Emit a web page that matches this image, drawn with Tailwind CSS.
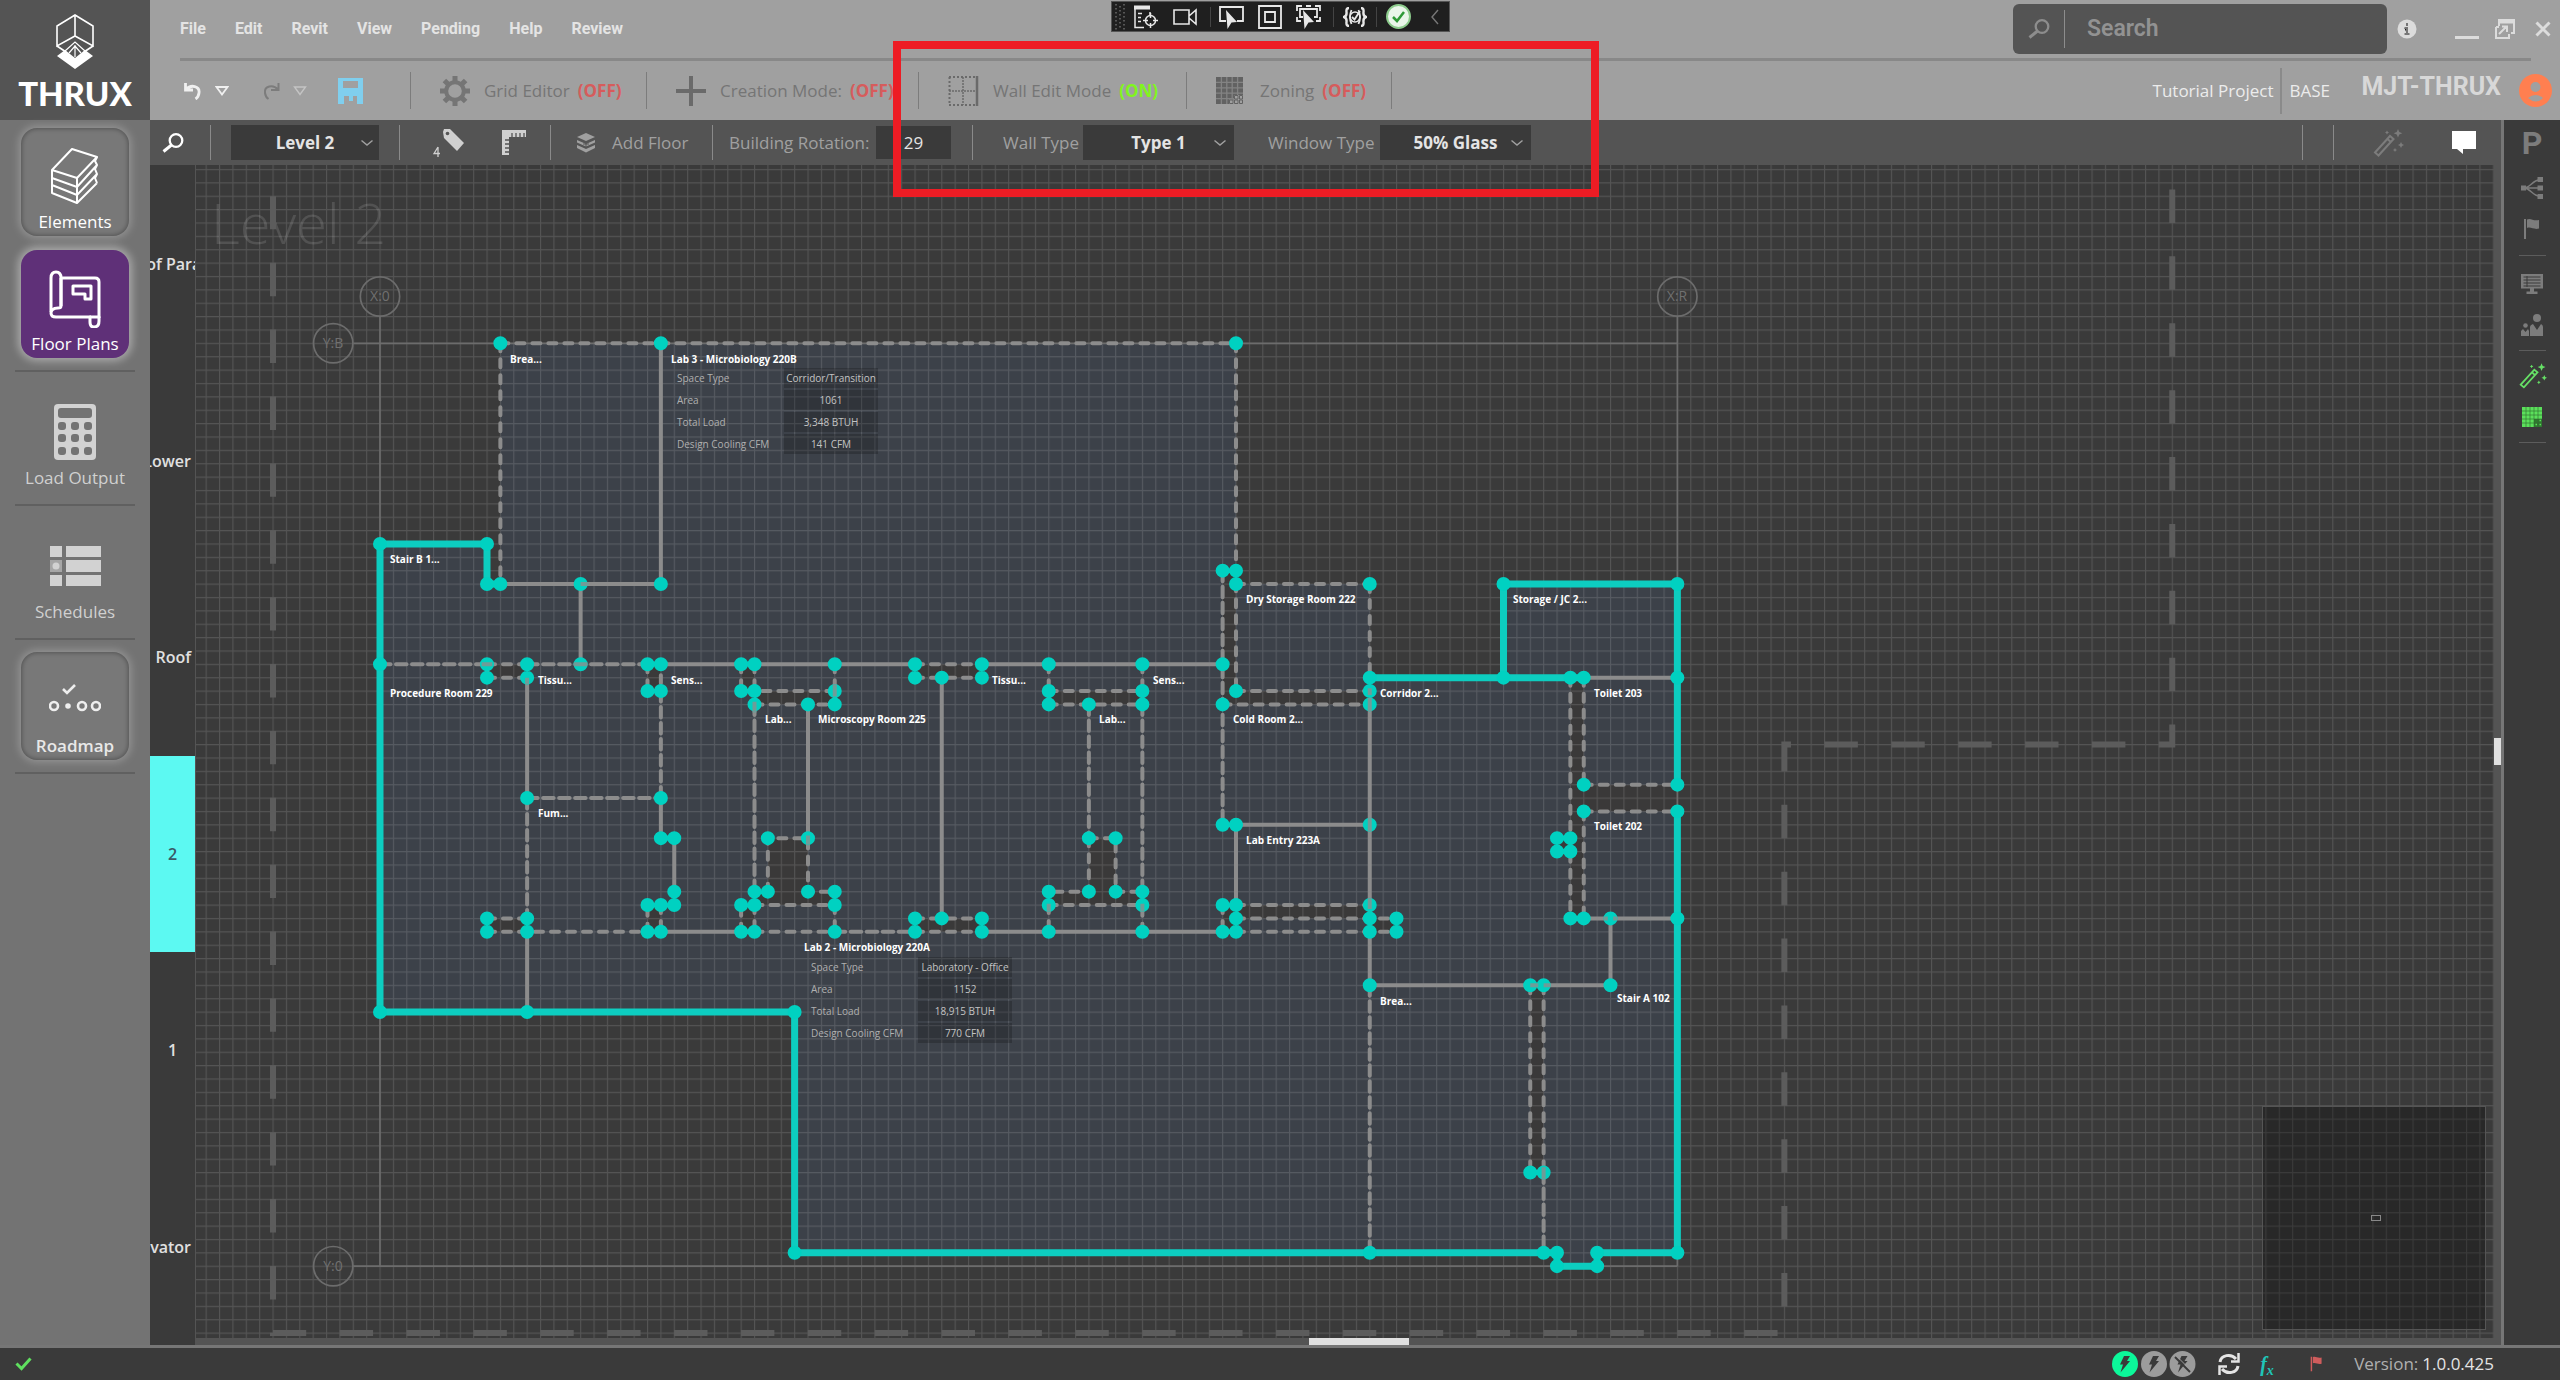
<!DOCTYPE html>
<html lang="en">
<head>
<meta charset="utf-8">
<title>THRUX - Floor Plans</title>
<script src="https://cdn.jsdelivr.net/npm/@tailwindcss/browser@4"></script>
</head>
<body class="relative flex h-screen flex-col overflow-hidden bg-[#3a3a3a] font-['Open_Sans','Noto_Sans',sans-serif] text-[#dedede]">

<!-- Shared symbols -->
<svg class="hidden" aria-hidden="true">
  <symbol id="wand" viewBox="0 0 32 28">
    <path d="M3 23.5 18 7l3.500 3L6.500 26.500z M15.500 10l3.300 3" fill="none" stroke="currentColor" stroke-width="2"/>
    <path d="M26 0l1.300 3 3 1.200-3 1.200L26 8.500l-1.300-3.100-3-1.200 3-1.200zM29 13l1 2 2 1-2 1-1 2-1-2-2-1 2-1zM15 1.500l.7 1.300 1.300.7-1.300.7-.7 1.300-.7-1.300-1.300-.7 1.300-.7zM23 19l.7 1.300 1.300.7-1.300.7-.7 1.300-.7-1.300-1.300-.7 1.300-.7z" fill="currentColor"/>
  </symbol>
  <symbol id="zones" viewBox="0 0 27 27">
    <path d="M0 0h27v18h-9v4.500h-5V27H0z" fill="currentColor"/>
    <path d="M18.500 18.500h3.500v3.500h-3.500zM23.500 18.500h3v3.500h-3zM13.500 23h3.500v3.500h-3.500zM18.500 23h3.500v3.500h-3.500zM23.500 23h3v3.500h-3z" fill="none" stroke="currentColor"/>
    <path d="M5.400 0v27M10.800 0v27M16.200 0v22M21.600 0v18M0 5.400h27M0 10.800h27M0 16.200h27M0 21.600h18" stroke="#8c8c8c" stroke-opacity=".8" stroke-width="1.300"/>
  </symbol>
  <symbol id="flag" viewBox="0 0 16 22">
    <path d="M1 1v20" stroke="currentColor" stroke-width="2"/>
    <path d="M3 1.500c4-2 6 2 12 .5v8.500c-5 1.500-8-2-12-.5z" fill="currentColor"/>
  </symbol>
  <symbol id="chev" viewBox="0 0 14 8">
    <path d="M1.500 1.500 7 6l5.500-4.500" fill="none" stroke="currentColor" stroke-width="1.500"/>
  </symbol>
  <symbol id="mag" viewBox="0 0 22 20">
    <circle cx="14" cy="7.500" r="6.300" fill="none" stroke="currentColor" stroke-width="2.300"/>
    <path d="M9.500 12 1.500 18.500" stroke="currentColor" stroke-width="3"/>
  </symbol>
</svg>

<div class="flex min-h-0 flex-1">
  <!-- Main navigation -->
  <aside class="flex w-[150px] shrink-0 flex-col bg-[#737373]">
    <div class="flex h-[120px] flex-col items-center bg-[#545454] pt-[14px]">
      <svg class="h-[56px] w-[42px]" viewBox="0 0 42 56" fill="none" stroke="#fff" stroke-width="1.600">
        <path d="M21 1 39 12v20L21 22 3 32V12zM21 1v21M3 32l9 6M39 32l-9 6"/>
        <path d="M11 37l10-9 10 9M15 39l6-7 6 7M21 31v12" stroke-width="1.200"/>
        <path d="M21 55 3 42l8-6 10 8 10-8 8 6z" fill="#fff" stroke="none"/>
      </svg>
      <h1 class="mt-[7px] font-[Lato,sans-serif] text-[33px]/[33px] font-black text-white">THRUX</h1>
    </div>
    <nav class="flex flex-col items-center gap-3 pt-2 text-[17px]/[20px]">
      <button class="flex h-[108px] w-[108px] flex-col items-center justify-between rounded-2xl bg-[#787878] pt-5 pb-1 text-white shadow-[0_0_8px_2px_rgba(255,255,255,0.25),inset_0_0_4px_1px_rgba(0,0,0,0.3)]">
        <svg class="h-[56px] w-[50px]" viewBox="0 0 50 56" fill="none" stroke="#fff" stroke-width="2" stroke-linejoin="round">
          <path d="M2 22 22 1l25 8-20 21z"/>
          <path d="M2 22v23l25 10 20-20M2 30l25 9 20-22M2 37l25 10 20-21M27 30v25M47 9l-2 4 2 4-2 4 2 5-2 4 2 5"/>
        </svg>
        Elements
      </button>
      <button class="mt-[2px] flex h-[108px] w-[108px] flex-col items-center justify-between rounded-2xl bg-[#5f3078] pt-5 pb-1 text-white shadow-[0_0_9px_3px_rgba(255,255,255,0.4)]">
        <svg class="h-[58px] w-[52px]" viewBox="0 0 52 58" fill="none" stroke="#fff" stroke-width="3" stroke-linejoin="round">
          <path d="M12 8h34q4 0 4 4v36"/>
          <path d="M12 8v28q0 2-3 2-7 0-7 5 0 4 5 4h35"/>
          <path d="M2 42V8q0-6 5-6t5 6v28"/>
          <path d="M41 47h9v4q0 6-5 6-4 0-4-5z"/>
          <path d="M24 16h18v13h-6v-5H24z"/>
        </svg>
        Floor Plans
      </button>
      <hr class="h-[2px] w-[120px] border-0 bg-[#606060]">
      <button class="flex h-[108px] w-[120px] flex-col items-center justify-between pt-5 pb-1 text-[#d0d0d0]">
        <svg class="h-[56px] w-[42px]" viewBox="0 0 42 56">
          <rect width="42" height="56" rx="4" fill="#d2d2d2"/>
          <g fill="#737373"><rect x="4" y="4" width="34" height="10" rx="3"/>
          <rect x="4" y="18" width="8" height="8" rx="3"/><rect x="17" y="18" width="8" height="8" rx="3"/><rect x="30" y="18" width="8" height="8" rx="3"/>
          <rect x="4" y="30" width="8" height="8" rx="3"/><rect x="17" y="30" width="8" height="8" rx="3"/><rect x="30" y="30" width="8" height="8" rx="3"/>
          <rect x="4" y="43" width="8" height="8" rx="3"/><rect x="17" y="43" width="8" height="8" rx="3"/><rect x="30" y="43" width="8" height="8" rx="3"/></g>
        </svg>
        Load Output
      </button>
      <hr class="h-[2px] w-[120px] border-0 bg-[#606060]">
      <button class="flex h-[108px] w-[120px] flex-col items-center justify-between pt-7 pb-1 text-[#d0d0d0]">
        <svg class="h-[40px] w-[51px]" viewBox="0 0 51 40" fill="#d2d2d2">
          <path d="M0 0h12v11H0zM16 0h35v11H16zM16 14h35v12H16zM0 29h12v11H0zM16 29h35v11H16z"/>
          <path d="M0 14h12v12H0z" fill="#a6a6a6"/><circle cx="6" cy="20" r="3.500"/>
        </svg>
        Schedules
      </button>
      <hr class="h-[2px] w-[120px] border-0 bg-[#606060]">
      <button class="flex h-[108px] w-[108px] flex-col items-center justify-between rounded-2xl bg-[#787878] pt-[31px] pb-1 font-semibold text-[#e8e8e8] shadow-[0_0_8px_2px_rgba(255,255,255,0.25),inset_0_0_4px_1px_rgba(0,0,0,0.3)]">
        <svg class="h-[30px] w-[52px]" viewBox="0 0 52 30" fill="none" stroke="#eee" stroke-width="2.600">
          <circle cx="5" cy="23" r="4"/><circle cx="19" cy="23" r="1.500" fill="#eee"/><circle cx="33" cy="23" r="4"/><circle cx="47" cy="23" r="4"/>
          <path d="M14 6l4 4 8-8"/>
        </svg>
        Roadmap
      </button>
      <hr class="h-[2px] w-[120px] border-0 bg-[#606060]">
    </nav>
  </aside>

  <div class="flex min-w-0 flex-1 flex-col">
    <!-- Header -->
    <header class="flex h-[120px] shrink-0 flex-col bg-[#a0a0a0] pl-[30px] pr-2">
      <div class="flex h-[58px] items-center">
        <nav class="flex flex-1 gap-[29px] font-[Roboto,sans-serif] text-[16px]/[20px] font-bold text-[#e4e4e4]">
          <button>File</button><button>Edit</button><button>Revit</button><button>View</button><button>Pending</button><button>Help</button><button>Review</button>
        </nav>
        <label class="flex h-[50px] w-[374px] items-center rounded-md bg-[#545454] pl-[15px] text-[#8d8d8d]">
          <svg class="h-[22px] w-[22px]"><use href="#mag"/></svg>
          <span class="ml-[14px] h-[38px] w-px bg-[#8d8d8d]"></span>
          <input type="text" placeholder="Search" aria-label="Search" class="ml-[22px] w-[240px] bg-transparent font-[Roboto,sans-serif] text-[23px]/[28px] font-semibold placeholder:text-[#929292]">
        </label>
        <div class="ml-[10px] flex w-[155px] items-center justify-between pr-[1px] text-[#dcdcdc]">
          <button aria-label="Info"><svg class="h-5 w-5" viewBox="0 0 20 20"><circle cx="10" cy="10" r="9.500" fill="currentColor"/><path d="M10 4v3M7.500 9H10v6M7.500 15h5" stroke="#777" stroke-width="2"/></svg></button>
          <div class="flex items-center gap-[16px]">
            <button aria-label="Minimize"><svg class="h-5 w-6" viewBox="0 0 24 20"><path d="M0 18.500h24" stroke="currentColor" stroke-width="3"/></svg></button>
            <button aria-label="Restore"><svg class="h-5 w-5" viewBox="0 0 20 20" fill="none" stroke="currentColor" stroke-width="2"><path d="M4 7V1h15v13h-3"/><path d="M4 2.500h15" stroke-width="4"/><path d="M1 8h3M1 8v11h13v-4M4 15l7-7M7 7.500h5V13"/></svg></button>
            <button class="ml-[4px]" aria-label="Close"><svg class="h-4 w-4" viewBox="0 0 16 16"><path d="M1.500 1.500l13 13M14.500 1.500l-13 13" stroke="currentColor" stroke-width="3"/></svg></button>
          </div>
        </div>
      </div>
      <hr class="mr-[21px] h-[3px] shrink-0 border-0 bg-[#888]">
      <div class="flex h-[59px] items-center text-[17px]/[24px] text-[#757575]">
        <div class="flex h-[37px] w-[231px] shrink-0 items-center border-r border-[#7c7c7c] pl-1 text-[#f0f0f0]">
          <button aria-label="Undo"><svg class="h-[18px] w-[18px]" viewBox="0 0 18 18" fill="none" stroke="currentColor" stroke-width="2.800"><path d="M1.500 1v7H9M2 7.500C7 2 16 4 15 11q-.5 4-3.500 6"/></svg></button>
          <button class="ml-[13px]" aria-label="Undo history"><svg class="h-[10px] w-[14px]" viewBox="0 0 14 10"><path d="M1.500 1h11L7 8.500z" fill="none" stroke="currentColor" stroke-width="1.800"/></svg></button>
          <button class="ml-[33px] text-[#7c7c7c]" aria-label="Redo"><svg class="h-[18px] w-[18px]" viewBox="0 0 18 18" fill="none" stroke="currentColor" stroke-width="2"><path d="M16.500 1v7H9M16 7.500C11 2 2 4 3 11q.5 4 3.500 6"/></svg></button>
          <button class="ml-[13px] text-[#c4c4c4]" aria-label="Redo history"><svg class="h-[10px] w-[14px]" viewBox="0 0 14 10"><path d="M1.500 1h11L7 8.500z" fill="none" stroke="currentColor" stroke-width="1.400"/></svg></button>
          <button class="ml-[31px] text-[#80cfee]" aria-label="Save"><svg class="h-[26px] w-[25px]" viewBox="0 0 25 26" fill="currentColor" fill-rule="evenodd"><path d="M0 0h25v26h-6v-8h-4v5h-4v-5H6v8H0zM5 3v7h15V3z"/></svg></button>
        </div>
        <button class="flex h-[37px] w-[236px] shrink-0 items-center border-r border-[#7c7c7c] pl-[29px]">
          <svg class="h-[30px] w-[30px]" viewBox="0 0 30 30"><circle cx="15" cy="15" r="8.800" fill="none" stroke="currentColor" stroke-width="4"/><path d="M15 0v5M15 25v5M0 15h5M25 15h5M4.400 4.400l3.600 3.600M22 22l3.600 3.600M25.600 4.400 22 8M8 22l-3.600 3.600" stroke="currentColor" stroke-width="5"/></svg>
          <span class="ml-[14px]">Grid Editor</span><span class="ml-2 font-bold text-[#d65c5c]">(OFF)</span>
        </button>
        <button class="flex h-[37px] w-[272px] shrink-0 items-center border-r border-[#7c7c7c] pl-[29px]">
          <svg class="h-[30px] w-[30px]" viewBox="0 0 30 30"><path d="M15 0v30M0 15h30" stroke="#6a6a6a" stroke-width="4"/></svg>
          <span class="ml-[14px]">Creation Mode:</span><span class="ml-2 font-bold text-[#d65c5c]">(OFF)</span>
        </button>
        <button class="flex h-[37px] w-[268px] shrink-0 items-center border-r border-[#7c7c7c] pl-[29px]">
          <svg class="h-[30px] w-[31px]" viewBox="0 0 31 30" fill="none" stroke="#6a6a6a"><path d="M1 1h28M1 29h28M1.500 1v28" stroke-width="2" stroke-dasharray="2 2"/><path d="M15 1v28M1 15h28" stroke-width="1.500" stroke-dasharray="2 1"/><path d="M29 0v30" stroke-width="2.500"/></svg>
          <span class="ml-[14px]">Wall Edit Mode</span><span class="ml-2 font-bold text-[#80f51e]">(ON)</span>
        </button>
        <button class="flex h-[37px] w-[205px] shrink-0 items-center border-r border-[#7c7c7c] pl-[29px]">
          <svg class="h-[27px] w-[27px] text-[#626262]"><use href="#zones"/></svg>
          <span class="ml-[17px]">Zoning</span><span class="ml-2 font-bold text-[#d65c5c]">(OFF)</span>
        </button>
        <div class="flex flex-1 items-center justify-end text-[#ececec]">
          <span>Tutorial Project</span>
          <span class="mx-[7px] h-[46px] w-[2px] bg-[#8a8a8a]"></span>
          <span class="w-[72px]">BASE</span>
          <span class="pb-2 font-[Roboto,sans-serif] text-[25px]/[28px] font-bold text-[#d8d8d8]">MJT-THRUX</span>
          <button class="ml-[18px]" aria-label="Account"><svg class="h-[33px] w-[33px]" viewBox="0 0 33 33"><circle cx="16.500" cy="16.500" r="16.500" fill="#ff7f50"/><circle cx="16.500" cy="13" r="5" fill="#a0a0a0"/><path d="M9 24q7.500-6 15 0-7 7-15 0z" fill="#a0a0a0"/></svg></button>
        </div>
      </div>
    </header>

    <div class="flex min-h-0 flex-1">
      <div class="flex min-w-0 flex-1 flex-col border-r-[3px] border-[#767676]">
        <!-- Plan toolbar -->
        <div class="flex h-[45px] shrink-0 items-center bg-[#545454] text-[17px]/[24px] text-[#a0a0a0]">
          <div class="flex h-[35px] w-[61px] shrink-0 items-center border-r border-[#8a8a8a] pl-3 text-white">
            <button aria-label="Find"><svg class="h-5 w-[22px]"><use href="#mag"/></svg></button>
          </div>
          <div class="relative flex h-[35px] w-[189px] shrink-0 items-center border-r border-[#8a8a8a] px-5">
            <select aria-label="Level" class="h-[35px] w-full appearance-none bg-[#3a3a3a] font-bold text-[#e4e4e4] [text-align-last:center]"><option>Level 2</option></select>
            <svg class="pointer-events-none absolute right-[25px] h-2 w-[14px]"><use href="#chev"/></svg>
          </div>
          <div class="flex h-[35px] w-[151px] shrink-0 items-center gap-[36px] border-r border-[#8a8a8a] pl-[32px] text-[#d0d0d0]">
            <button aria-label="Tags"><svg class="h-[30px] w-[34px]" viewBox="0 0 34 30"><path d="M11 4l1-3 6 0 14 14-7 8L12 10z" fill="currentColor"/><circle cx="15.500" cy="5.500" r="1.800" fill="#545454"/><path d="M6 19v10M6 19l-4 6.500h6" fill="none" stroke="currentColor" stroke-width="1.300"/></svg></button>
            <button aria-label="Measure"><svg class="h-[25px] w-[24px]" viewBox="0 0 24 25"><path d="M0 0h24v7H7v18H0z" fill="currentColor"/><path d="M10 7V3M14 7V3M18 7V3M22 7V3M7 10H3M7 14H3M7 18H3M7 22H3" stroke="#545454" stroke-width="1.300"/></svg></button>
          </div>
          <button class="flex h-[35px] w-[162px] shrink-0 items-center border-r border-[#8a8a8a] pl-[25px]">
            <svg class="h-5 w-5" viewBox="0 0 20 20" fill="currentColor"><path d="M10 0l9 4-9 4-9-4zM1 7l9 4 9-4v2.500l-9 4-9-4zM1 12l9 4 9-4v3l-9 4.500L1 15z"/><path d="M7 11h6M10 8v6" stroke="#545454"/></svg>
            <span class="ml-4">Add Floor</span>
          </button>
          <div class="flex h-[35px] w-[260px] shrink-0 items-center border-r border-[#8a8a8a] pl-4">
            <label for="rotation" class="w-[147px] whitespace-nowrap">Building Rotation:</label>
            <input id="rotation" type="text" value="29" class="h-[33px] w-[75px] bg-[#3a3a3a] text-center text-[#e4e4e4]">
          </div>
          <label for="walltype" class="ml-[30px] w-[80px] shrink-0">Wall Type</label>
          <div class="relative flex w-[151px] shrink-0 items-center">
            <select id="walltype" class="h-[35px] w-full appearance-none bg-[#3a3a3a] font-bold text-[#e4e4e4] [text-align-last:center]"><option>Type 1</option></select>
            <svg class="pointer-events-none absolute right-[7px] h-2 w-[14px]"><use href="#chev"/></svg>
          </div>
          <label for="windowtype" class="ml-[34px] w-[112px] shrink-0">Window Type</label>
          <div class="relative flex w-[151px] shrink-0 items-center">
            <select id="windowtype" class="h-[35px] w-full appearance-none bg-[#3a3a3a] font-bold text-[#e4e4e4] [text-align-last:center]"><option>50% Glass</option></select>
            <svg class="pointer-events-none absolute right-[7px] h-2 w-[14px]"><use href="#chev"/></svg>
          </div>
          <div class="flex flex-1 items-center justify-end pr-[25px]">
            <span class="h-[35px] w-px bg-[#8a8a8a]"></span>
            <span class="ml-[30px] h-[35px] w-px bg-[#8a8a8a]"></span>
            <button class="ml-[38px] text-[#7c7c7c]" aria-label="Auto detect"><svg class="h-[28px] w-[32px]"><use href="#wand"/></svg></button>
            <button class="ml-[48px] text-white" aria-label="Comments"><svg class="h-[23px] w-[24px]" viewBox="0 0 24 23"><path d="M0 0h24v18H11v5l-6-5H0z" fill="currentColor"/></svg></button>
          </div>
        </div>

        <div class="flex min-h-0 flex-1">
          <!-- Level strip -->
          <div class="flex w-[45px] shrink-0 flex-col pt-px text-[16px]/[20px] font-semibold text-[#e0e0e0]">
            <button class="flex flex-1 items-center justify-center overflow-hidden pl-2 whitespace-nowrap">Roof Parapet</button>
            <button class="flex flex-1 items-center justify-end overflow-hidden pr-1">Lower</button>
            <button class="flex flex-1 items-center justify-end overflow-hidden pr-1">Roof</button>
            <button class="flex flex-1 items-center justify-center bg-[#5cf9f2] text-[#3a5a66]">2</button>
            <button class="flex flex-1 items-center justify-center">1</button>
            <button class="flex flex-1 items-center justify-end overflow-hidden pr-1">Elevator</button>
          </div>

          <div class="flex min-w-0 flex-1 flex-col">
            <div class="flex min-h-0 flex-1">
              <!-- Drawing canvas: one plan unit is 13.375px -->
              <main class="relative min-w-0 flex-1 overflow-hidden border-l border-[#545454]">
                <svg class="absolute inset-0 h-full w-full">
                  <defs>
                    <pattern id="grid" width="13.375" height="13.375" patternUnits="userSpaceOnUse" patternTransform="translate(183.500 177.800)">
                      <path d="M0 .5h13.375M.5 0v13.375" stroke="#fff" stroke-opacity=".135" stroke-width="1.200"/>
                    </pattern>
                  </defs>
                  <text x="15" y="79" class="font-light" font-size="56" fill="#525252">Level 2</text>
                  <g transform="translate(184 178.300) scale(13.375)" fill="none">
                    <path fill="#3c4149" d="M0 15H8V18H9V0H64V18H74V25H84V18H97V68H91V69H88V68H31V50H0Z"/>
                    <path fill="#3a3939" d="M8 24h3v1h-3zM20 24h1v2h-1zM27 24h1v2h-1zM28 26h6v1h-6zM40 24h5v1h-5zM50 26h7v1h-7zM63 17h1v9h10v1H63zM29 37h3v4h2v1h-6v-1h1zM53 37h2v4h2v1h-7v-1h3zM8 43h3v1h-3zM20 42h1v2h-1zM27 42h1v2h-1zM40 43h5v1h-5zM63 42h11v1h-10v1h-1zM74 43h2v1h-2zM89 25h1v8h7v2h-7v8h-1zM88 37h1v1h-1zM86 48h1v14h-1z"/>
                  </g>
                  <rect width="100%" height="100%" fill="url(#grid)"/>
                  <g transform="translate(184 178.300) scale(13.375)" fill="none">
                    <path vector-effect="non-scaling-stroke" stroke="#5c5c5c" stroke-width="6" stroke-dasharray="33.440 33.440" d="M134 -11.500V30H105V74H-8V-11"/>
                    <g stroke="#6c6c6c" stroke-width="1.700">
                      <path vector-effect="non-scaling-stroke" d="M0-2V69M97-2V69M-2 0H97M-2 69H97"/>
                      <circle vector-effect="non-scaling-stroke" cx="0" cy="-3.500" r="1.470"/><circle vector-effect="non-scaling-stroke" cx="97" cy="-3.500" r="1.470"/>
                      <circle vector-effect="non-scaling-stroke" cx="-3.500" cy="0" r="1.470"/><circle vector-effect="non-scaling-stroke" cx="-3.500" cy="69" r="1.470"/>
                    </g>
                    <!-- Interior walls -->
                    <g stroke="#8c8c8c" stroke-width="4">
                      <path vector-effect="non-scaling-stroke" d="M21 0V18M9 18H21M15 18V24M20 24H40M11 25V34M11 44V50M21 34V37M22 37V41M21 44H28M42 25V43M45 24H63M45 44H63M32 27V37M64 36H74M64 36V42M74 27V48M74 48H92V43M90 25H97M90 43H97"/>
                      <path vector-effect="non-scaling-stroke" stroke-linecap="round" stroke-dasharray="10.500 5.500" d="M21 26V34M28 27V41M53 27V37M57 27V41M74 48V68M87 62V68M0 24H8M11 24H20M11 34H21M11 34V43M63 17V36M34 44H40"/>
                      <path vector-effect="non-scaling-stroke" stroke-linecap="round" stroke-dasharray="8 8" d="M9 0H64M9 0V18M64 0V26M63 17H64M64 18H74M74 18V25M64 26H74M63 27H74M8 24H11M8 25H11M8 24V25M20 24V26H21V24M27 24V26H34M28 24V26M28 27H34M34 24V27M8 43H11M8 44H20M20 44V42H22V41M21 42V44M29 41V37H32V41H34M28 42H34M27 44V42M28 42V44M34 42V44M28 44H34M40 24H45M40 25H45M40 43H45M40 44H45M50 24V27M50 26H57M50 27H57M57 24V27M57 41V44M53 37H55V41H57M53 37V41H50M50 42H57M50 42V44M63 42V44M64 42H74M64 43H76M64 44H76M90 33H97M90 35H97M89 25V43M90 25V33M90 35V43M86 48V62M87 48V62"/>
                    </g>
                    <!-- Exterior walls -->
                    <path vector-effect="non-scaling-stroke" stroke="#0dcdc0" stroke-width="7" d="M9 18H8V15H0V50H31V68H88V69H91V68H97V35M97 33V18H84V25M74 25H90"/>
                    <!-- Wall joints -->
                    <path vector-effect="non-scaling-stroke" stroke="#00d1c1" stroke-width="14" stroke-linecap="round" d="M9 0h0M21 0h0M64 0h0M0 15h0M8 15h0M8 18h0M9 18h0M15 18h0M21 18h0M0 24h0M8 24h0M11 24h0M15 24h0M20 24h0M21 24h0M27 24h0M28 24h0M34 24h0M40 24h0M45 24h0M50 24h0M57 24h0M63 24h0M8 25h0M11 25h0M40 25h0M42 25h0M45 25h0M20 26h0M21 26h0M27 26h0M28 26h0M34 26h0M50 26h0M57 26h0M28 27h0M32 27h0M34 27h0M50 27h0M53 27h0M57 27h0M11 34h0M21 34h0M21 37h0M22 37h0M29 37h0M32 37h0M53 37h0M55 37h0M22 41h0M28 41h0M29 41h0M32 41h0M34 41h0M50 41h0M53 41h0M55 41h0M57 41h0M20 42h0M21 42h0M22 42h0M27 42h0M28 42h0M34 42h0M50 42h0M57 42h0M8 43h0M11 43h0M40 43h0M42 43h0M45 43h0M8 44h0M11 44h0M20 44h0M21 44h0M27 44h0M28 44h0M34 44h0M40 44h0M45 44h0M50 44h0M57 44h0M0 50h0M11 50h0M31 50h0M63 17h0M64 17h0M64 18h0M74 18h0M74 25h0M64 26h0M74 26h0M63 27h0M74 27h0M63 36h0M64 36h0M74 36h0M63 42h0M64 42h0M74 42h0M64 43h0M74 43h0M76 43h0M63 44h0M64 44h0M74 44h0M76 44h0M74 48h0M86 48h0M87 48h0M92 48h0M84 18h0M97 18h0M84 25h0M89 25h0M90 25h0M97 25h0M90 33h0M97 33h0M90 35h0M97 35h0M88 37h0M89 37h0M88 38h0M89 38h0M89 43h0M90 43h0M92 43h0M97 43h0M86 62h0M87 62h0M31 68h0M74 68h0M87 68h0M88 68h0M91 68h0M97 68h0M88 69h0M91 69h0"/>
                    <path vector-effect="non-scaling-stroke" stroke="#6f9c98" stroke-width="4" d="M15 18h.6M14.500 24h1M7.600 24h.8M74 25.800v.500M74 26.500v1M74 35.500v1M74 41.500v.800M32 36.800v.700M28 26.800v.800M11 25v.500M34 25.500v.900M86 48h.6M87 48h.5M91.500 43h.3M92.200 43h.3M87 61.600v.900M57 41.900v.600M50 41.900v.600"/>
                  </g>
                  <g font-size="14" fill="#707070" text-anchor="middle">
                    <text x="184" y="136">X:0</text><text x="1481" y="136">X:R</text><text x="137" y="183">Y:B</text><text x="137" y="1106">Y:0</text>
                  </g>
                  <g font-size="10" fill="#fff" class="font-bold">
                    <text x="314" y="198">Brea...</text><text x="475" y="198">Lab 3 - Microbiology 220B</text>
                    <text x="194" y="398">Stair B 1...</text>
                    <text x="342" y="519">Tissu...</text><text x="475" y="519">Sens...</text><text x="796" y="519">Tissu...</text><text x="957" y="519">Sens...</text>
                    <text x="194" y="532">Procedure Room 229</text>
                    <text x="569" y="558">Lab...</text><text x="622" y="558">Microscopy Room 225</text><text x="903" y="558">Lab...</text>
                    <text x="342" y="652">Fum...</text>
                    <text x="1050" y="438">Dry Storage Room 222</text><text x="1037" y="558">Cold Room 2...</text><text x="1050" y="679">Lab Entry 223A</text>
                    <text x="1317" y="438">Storage / JC 2...</text><text x="1184" y="532">Corridor 2...</text>
                    <text x="1398" y="532">Toilet 203</text><text x="1398" y="665">Toilet 202</text>
                    <text x="1184" y="840">Brea...</text><text x="1421" y="837">Stair A 102</text>
                    <text x="608" y="786">Lab 2 - Microbiology 220A</text>
                  </g>
                </svg>

                <dl class="absolute top-[203px] left-[481px] grid grid-cols-[107px_94px] gap-y-[2px] text-[10px]/[20px] text-[#b0b0b0]">
                  <dt>Space Type</dt><dd class="bg-black/20 text-center text-[#c4c4c4]">Corridor/Transition</dd>
                  <dt>Area</dt><dd class="bg-black/20 text-center text-[#c4c4c4]">1061</dd>
                  <dt>Total Load</dt><dd class="bg-black/20 text-center text-[#c4c4c4]">3,348 BTUH</dd>
                  <dt>Design Cooling CFM</dt><dd class="bg-black/20 text-center text-[#c4c4c4]">141 CFM</dd>
                </dl>
                <dl class="absolute top-[792px] left-[615px] grid grid-cols-[107px_94px] gap-y-[2px] text-[10px]/[20px] text-[#b0b0b0]">
                  <dt>Space Type</dt><dd class="bg-black/20 text-center text-[#c4c4c4]">Laboratory - Office</dd>
                  <dt>Area</dt><dd class="bg-black/20 text-center text-[#c4c4c4]">1152</dd>
                  <dt>Total Load</dt><dd class="bg-black/20 text-center text-[#c4c4c4]">18,915 BTUH</dd>
                  <dt>Design Cooling CFM</dt><dd class="bg-black/20 text-center text-[#c4c4c4]">770 CFM</dd>
                </dl>

                <!-- Minimap -->
                <div class="absolute right-2 bottom-2 flex h-[224px] w-[224px] items-center justify-center border border-[#555] bg-black/30">
                  <span class="ml-1 h-[6px] w-[10px] border border-[#888]"></span>
                </div>
              </main>
              <div class="flex w-[7px] flex-col items-center bg-[#545454] pt-[573px]"><span class="h-[27px] w-full bg-[#e0e0e0]"></span></div>
            </div>
            <div class="h-[7px] bg-[#545454] pl-[1114px]"><div class="h-full w-[100px] bg-[#e0e0e0]"></div></div>
          </div>
        </div>
      </div>

      <!-- Right rail -->
      <aside class="flex w-[56px] shrink-0 flex-col items-center bg-[#3a3a3a] text-[#7c7c7c]">
        <button class="mt-[7px] font-[Roboto,sans-serif] text-[32px]/[32px] font-bold" aria-label="Properties">P</button>
        <button class="mt-[18px]" aria-label="Network"><svg class="h-[22px] w-[22px]" viewBox="0 0 22 22"><path d="M2 11h17M3 11C9 11 12 3 18 3M3 11c6 0 9 8 15 8" fill="none" stroke="currentColor" stroke-width="1.600"/><path d="M0 8.500h5v5H0zM16.500 8.500H22v5h-5.500zM16.500 0H22v5h-5.500zM16.500 17H22v5h-5.500z" fill="currentColor"/></svg></button>
        <button class="mt-[19px]" aria-label="Flags"><svg class="h-[22px] w-4"><use href="#flag"/></svg></button>
        <hr class="mt-[15px] h-px w-[27px] border-0 bg-[#5c5c5c]">
        <button class="mt-[18px]" aria-label="Display"><svg class="h-5 w-[22px]" viewBox="0 0 22 20"><path d="M0 0h22v14.500H0zM9 14h4v4H9zM5.500 17.500h11V20h-11z" fill="currentColor"/><path d="M2.500 3h17M2.500 6h17M2.500 9h17M2.500 12h17M6 2v11" stroke="#3a3a3a"/></svg></button>
        <button class="mt-5" aria-label="Occupants"><svg class="h-[22px] w-[22px]" viewBox="0 0 22 22" fill="currentColor"><circle cx="16" cy="4" r="4"/><circle cx="4.500" cy="11.500" r="2.300"/><path d="M9 22v-9q0-2 3-3l4 6 4-6q2 1 2 3v9zM0 22v-5l2-2 2.500 3L7 15l1 2v5z"/></svg></button>
        <hr class="mt-[14px] h-px w-[27px] border-0 bg-[#5c5c5c]">
        <button class="mt-[12px] text-[#66e066]" aria-label="Auto walls"><svg class="h-[26px] w-[29px]"><use href="#wand"/></svg></button>
        <button class="mt-[18px] text-[#55dd55]" aria-label="Zones">
          <svg class="h-5 w-5" viewBox="0 0 20 20"><path d="M0 0h20v12h-4v4h-4v4H0z" fill="#5be05b"/><path d="M12 12h8v8h-8z" fill="#2f7a2f"/><path d="M4 0v20M8 0v20M12 0v20M16 0v20M0 4h20M0 8h20M0 12h20M0 16h20" stroke="#2f6a2f" stroke-opacity=".6"/><path d="M13.500 17.500h1.500M17.500 17.500H19M17.500 13.500H19" stroke="#5be05b" stroke-width="1.500"/></svg>
        </button>
        <hr class="mt-[15px] h-px w-[27px] border-0 bg-[#5c5c5c]">
      </aside>
    </div>
  </div>
</div>

<!-- Status bar -->
<footer class="flex h-[35px] shrink-0 items-center border-t-[3px] border-[#767676] bg-[#3a3a3a] pr-[66px] pl-[15px] text-[17px]/[24px]">
  <svg class="h-[14px] w-[17px]" viewBox="0 0 17 14"><path d="M1.500 6.500l5 5 9-10" fill="none" stroke="#5fe05f" stroke-width="3"/></svg>
  <div class="flex flex-1 items-center justify-end">
    <svg class="h-[26px] w-[84px]" viewBox="0 0 84 26">
      <circle cx="13" cy="13" r="13" fill="#0cf89a"/><circle cx="42" cy="13" r="13" fill="#9c9c9c"/><circle cx="70.500" cy="13" r="13" fill="#9c9c9c"/>
      <g fill="#3a3a3a"><path id="bolt" d="M12 5h6l-3 5h3L8.500 21.500l2.500-8H8z"/><use href="#bolt" x="29"/><use href="#bolt" x="57.500"/></g>
      <path d="M63 6l15 15" stroke="#3a3a3a" stroke-width="2"/><path d="M64.500 5l14 14" stroke="#9c9c9c"/>
    </svg>
    <svg class="ml-[22px] h-6 w-[22px]" viewBox="0 0 22 24" fill="none" stroke="#e4e4e4" stroke-width="3"><path d="M2 10C3 3 13 1 18 7M20 14c-1 7-11 9-16 3"/><path d="M20.500 1v8.500H13M1.500 23v-8.500H9" stroke-width="2.500"/></svg>
    <span class="ml-5 w-[16px] font-['Liberation_Serif',serif] text-[20px]/[24px] font-bold text-[#20c4b8] italic">f<sub class="text-[14px]/[14px]">x</sub></span>
    <svg class="ml-[34px] h-4 w-[13px] text-[#cf5c5c]"><use href="#flag"/></svg>
    <span class="ml-[31px] text-[#b0b0b0]">Version:</span>
    <span class="ml-1 text-[#e4e4e4]">1.0.0.425</span>
  </div>
</footer>

<!-- Debug toolbar -->
<div class="absolute top-px left-[1111px] flex h-[31px] w-[339px] items-center border border-[#555] bg-[#1f1f1f] text-[#e8e8e8]">
  <svg class="ml-[3px] h-[26px] w-[10px]" viewBox="0 0 10 26"><path d="M1 0v26M9 0v26M5 2v24" stroke="#6a6a6a" stroke-width="1.500" stroke-dasharray="1.500 2.500"/></svg>
  <svg class="ml-2 h-6 w-[26px]" viewBox="0 0 26 24" fill="none" stroke="currentColor" stroke-width="1.500"><path d="M1 2.500h16" stroke-width="4"/><path d="M2 4v18.500h9M5 8.500h4M5 12.500h3M5 16.500h3M17 10V7"/><circle cx="17.500" cy="15.500" r="5"/><path d="M17.500 8v5M17.500 18v5M10 15.500h5M20 15.500h5"/></svg>
  <svg class="ml-[14px] h-[18px] w-[25px]" viewBox="0 0 25 18" fill="none" stroke="currentColor" stroke-width="1.600"><path d="M1 2h15v14H1zM16 8l7-6v14l-7-6"/></svg>
  <span class="ml-3 h-5 w-px bg-[#444]"></span>
  <svg class="ml-2 h-6 w-[25px]" viewBox="0 0 25 24"><path d="M7 16H1V2h23v14h-6" fill="none" stroke="currentColor" stroke-width="1.800"/><path d="M7 5l11 12-5.500 .5L8.500 24z" fill="currentColor"/></svg>
  <svg class="ml-[14px] h-6 w-6" viewBox="0 0 24 24" fill="none" stroke="currentColor" stroke-width="1.800"><path d="M1 1h22v22H1zM7 7h10v10H7z"/></svg>
  <svg class="ml-[14px] h-6 w-[25px]" viewBox="0 0 25 24"><path d="M1 6V1h5M19 1h5v5M24 12v4h-4M1 12v4h4M7 12H4V4h17v8h-3M10 1h5" fill="none" stroke="currentColor" stroke-width="1.800"/><path d="M7 5l11 12-5.500 .5L8.500 24z" fill="currentColor"/></svg>
  <span class="ml-3 h-5 w-px bg-[#444]"></span>
  <svg class="ml-[9px] h-5 w-[24px]" viewBox="0 0 24 20" fill="none" stroke="currentColor" stroke-width="2.400"><path d="M6 1Q3 1 3.500 5T1 10q3 1 2.500 5T6 19M18 1q3 0 2.500 4t2.500 5q-3 1-2.500 5T18 19"/><circle cx="12" cy="10" r="5" stroke-width="1.600"/><path d="M8.500 3q-3 7 0 14M15.500 3q3 7 0 14M9 10l2.500 2.500L17 4" stroke-width="1.800"/></svg>
  <span class="ml-[9px] h-5 w-px bg-[#444]"></span>
  <svg class="ml-[9px] h-[25px] w-[25px]" viewBox="0 0 25 25"><circle cx="12.500" cy="12.500" r="11.500" fill="#eaf6ea" stroke="#8ccb8c" stroke-width="2"/><path d="M7 13l4 4 7-9" fill="none" stroke="#2f9a38" stroke-width="2.500"/></svg>
  <svg class="ml-[20px] h-4 w-2" viewBox="0 0 8 16"><path d="M7 1 1 8l6 7" fill="none" stroke="#777" stroke-width="1.400"/></svg>
</div>

<!-- Highlight frame -->
<div class="pointer-events-none absolute top-[41px] left-[893px] h-[156px] w-[706px] border-8 border-[#ed1c24]"></div>
</body>
</html>
